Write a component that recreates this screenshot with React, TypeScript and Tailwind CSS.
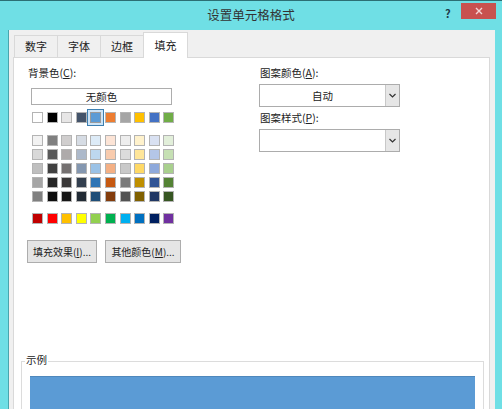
import React from "react";

const F = { fontFamily: '"Noto Sans CJK SC", "Noto Sans", sans-serif' };

const row1 = ["#FFFFFF", "#000000", "#E7E6E6", "#44546A", "#5B9BD5", "#ED7D31", "#A5A5A5", "#FFC000", "#4472C4", "#70AD47"];
const tints = [
  ["#F2F2F2", "#808080", "#D0CECE", "#D6DCE4", "#DDEBF7", "#FCE4D6", "#EDEDED", "#FFF2CC", "#D9E1F2", "#E2EFDA"],
  ["#D9D9D9", "#595959", "#AEAAAA", "#ADB9CA", "#BDD7EE", "#F8CBAD", "#DBDBDB", "#FFE699", "#B4C6E7", "#C6E0B4"],
  ["#BFBFBF", "#404040", "#757171", "#8497B0", "#9BC2E6", "#F4B084", "#C9C9C9", "#FFD966", "#8EA9DB", "#A9D08E"],
  ["#A6A6A6", "#262626", "#3A3838", "#333F4F", "#2F75B5", "#C65911", "#7B7B7B", "#BF8F00", "#305496", "#548235"],
  ["#808080", "#0D0D0D", "#161616", "#222B35", "#1F4E78", "#833C0C", "#525252", "#806000", "#203764", "#375623"],
];
const std = ["#C00000", "#FF0000", "#FFC000", "#FFFF00", "#92D050", "#00B050", "#00B0F0", "#0070C0", "#002060", "#7030A0"];

function Swatch({ c, selected }: { c: string; selected?: boolean }) {
  if (selected) {
    return (
      <div className="relative w-[11px] h-[11px]">
        <div className="absolute left-[-3px] top-[-3px] w-[17px] h-[17px] border border-[#3c7fb1] bg-[#cde4f7]" />
        <div className="absolute inset-0 border border-[#9a9a9a]" style={{ backgroundColor: c }} />
      </div>
    );
  }
  return <div className="w-[11px] h-[11px] border border-[#b4b4b4]" style={{ backgroundColor: c }} />;
}

function SwatchRow({ colors, sel }: { colors: string[]; sel?: number }) {
  return (
    <div className="flex gap-[3.6px]">
      {colors.map((c, i) => (
        <Swatch key={i} c={c} selected={sel === i} />
      ))}
    </div>
  );
}

function Dropdown({ value }: { value?: string }) {
  return (
    <div className="flex w-[141px] h-[23px] border border-[#acacac] bg-white">
      <div className="flex-1 flex items-center justify-center text-[10.5px] text-[#222]">{value}</div>
      <div className="w-[14px] border-l border-[#c8c8c8] bg-[#e6e6e6] flex items-center justify-center">
        <svg width="7" height="5" viewBox="0 0 7 5">
          <path d="M0.5 1 L3.5 4 L6.5 1" fill="none" stroke="#333" strokeWidth="1.2" />
        </svg>
      </div>
    </div>
  );
}

function Tab({ label, active }: { label: string; active?: boolean }) {
  if (active) {
    return (
      <div className="relative z-10 mb-[-1px] h-[26px] w-[45px] bg-white border border-b-0 border-[#d9d9d9] flex items-center justify-center text-[11px] text-[#222]">
        {label}
      </div>
    );
  }
  return (
    <div className="h-[22px] w-[43px] bg-[#f0f0f0] border border-r-0 border-b-0 border-[#d9d9d9] flex items-center justify-center text-[11px] text-[#222]">
      {label}
    </div>
  );
}

export default function App() {
  return (
    <div style={F} className="w-[502px] h-[409px] overflow-hidden bg-[#6fdfe5] border-t border-[#2c6f74] flex flex-col">
      <div className="relative shrink-0 h-[29px] flex items-center justify-center">
        <span className="text-[12.5px] text-[#333]">设置单元格格式</span>
        <span className="absolute left-[445px] top-[4px] text-[11px] font-bold text-[#1d3a4a]">?</span>
        <div className="absolute left-[461px] top-[2px] w-[35px] h-[16px] bg-[#c8514f] flex items-center justify-center">
          <svg width="8" height="8" viewBox="0 0 8 8">
            <path d="M1 1 L7 7 M7 1 L1 7" stroke="#f4d6d6" strokeWidth="1.4" />
          </svg>
        </div>
      </div>
      <div className="flex-1 min-h-0 ml-[8px] mr-[7px] bg-[#f0f0f0] border-l border-[#4aa6ad] pl-[4px] pr-[5px] flex flex-col overflow-hidden">
        <div className="shrink-0 flex items-end h-[27px] pl-[1px]">
          <Tab label="数字" />
          <Tab label="字体" />
          <Tab label="边框" />
          <Tab label="填充" active />
        </div>
        <div className="shrink-0 h-[400px] bg-white border border-[#d9d9d9] flex flex-col">
          <div className="flex shrink-0">
            <div className="w-[245px] pl-[14px] pt-[8px] flex flex-col">
              <div className="text-[10.5px] text-[#222] leading-[14px]">
                背景色(<span className="underline">C</span>):
              </div>
              <div className="ml-[3px] mt-[8px] w-[141px] h-[17px] border border-[#adadad] flex items-center justify-center text-[10.5px] text-[#222]">
                无颜色
              </div>
              <div className="ml-[4px] mt-[7px]">
                <SwatchRow colors={row1} sel={4} />
              </div>
              <div className="ml-[4px] mt-[12px] flex flex-col gap-[3px]">
                {tints.map((r, i) => (
                  <SwatchRow key={i} colors={r} />
                ))}
              </div>
              <div className="ml-[4px] mt-[11px]">
                <SwatchRow colors={std} />
              </div>
              <div className="flex gap-[8px] mt-[16px] ml-[-1px]">
                <div className="w-[70px] h-[23px] border border-[#adadad] bg-[#e5e5e5] flex items-center justify-center text-[10px] text-[#222]">
                  填充效果(<span className="underline">I</span>)...
                </div>
                <div className="w-[76px] h-[23px] border border-[#adadad] bg-[#e5e5e5] flex items-center justify-center text-[10px] text-[#222]">
                  其他颜色(<span className="underline">M</span>)...
                </div>
              </div>
            </div>
            <div className="pt-[8px] flex flex-col">
              <div className="text-[10.5px] text-[#222] leading-[14px] ml-[1px]">
                图案颜色(<span className="underline">A</span>):
              </div>
              <div className="mt-[4px]">
                <Dropdown value="自动" />
              </div>
              <div className="text-[10.5px] text-[#222] leading-[14px] ml-[1px] mt-[4px]">
                图案样式(<span className="underline">P</span>):
              </div>
              <div className="mt-[4px]">
                <Dropdown />
              </div>
            </div>
          </div>
          <div className="relative shrink-0 mt-[98px] ml-[7px] mr-[5px] h-[120px] border border-[#dcdcdc] px-[8px] pt-[14px]">
            <span className="absolute left-[3px] top-[-9px] bg-white px-[1px] text-[10.5px] leading-[14px] text-[#222]">示例</span>
            <div className="h-[80px] bg-[#5b9bd5] border-t border-[#4f88bc]" />
          </div>
        </div>
      </div>
    </div>
  );
}
